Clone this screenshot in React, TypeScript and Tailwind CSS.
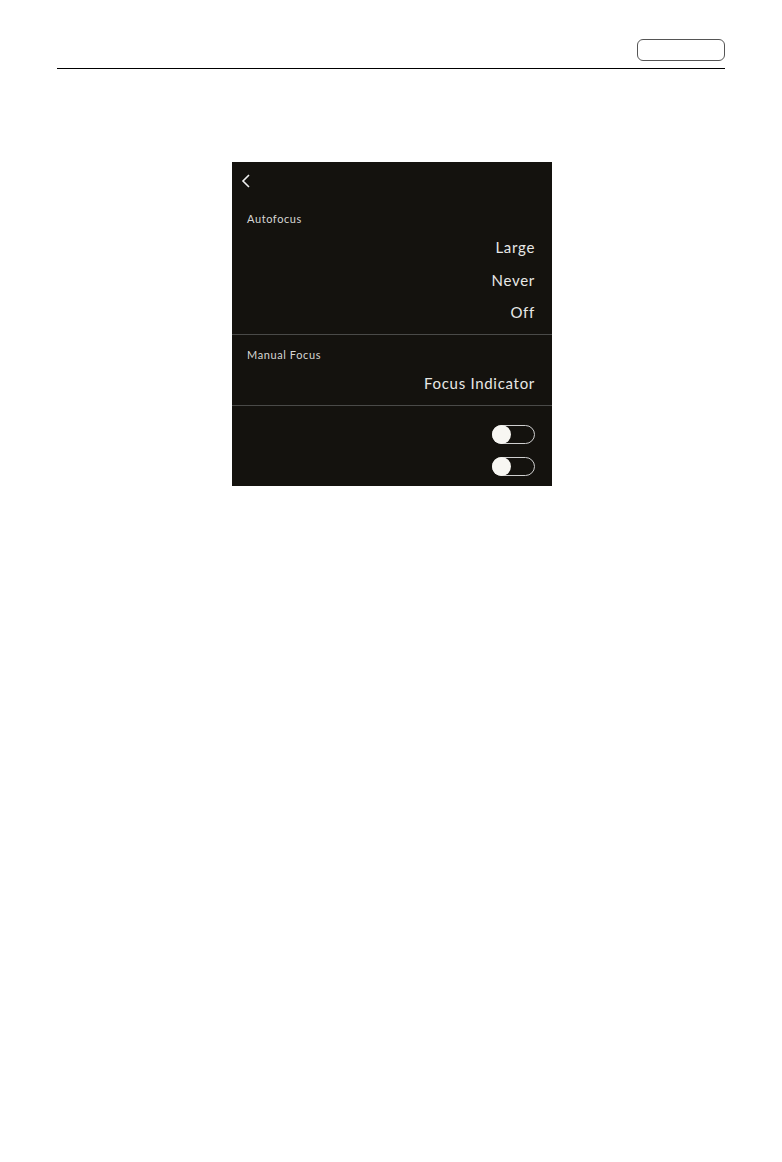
import React from 'react';

const Toggle: React.FC = () => (
  <div className="relative w-[43px] h-[19px] rounded-full border border-[#cfcfcf]">
    <span className="absolute -left-px -top-px w-[19px] h-[19px] rounded-full bg-[#f7f6f2]" />
  </div>
);

const Value: React.FC<{ children: React.ReactNode }> = ({ children }) => (
  <div className="text-right text-[15px] leading-none tracking-[0.7px] text-[#e8e8e6]">{children}</div>
);

const App: React.FC = () => {
  return (
    <div className="w-[782px] h-[1162px] bg-white font-['Lato','Liberation_Sans',sans-serif]">
      <header className="pt-[39px] pl-[57px] pr-[57px]">
        <div className="flex justify-end">
          <div className="w-[88px] h-[22px] rounded-[6px] border border-[#555]" />
        </div>
        <div className="mt-[7px] h-px bg-black" />
      </header>

      <div className="ml-[232px] mt-[93px] w-[320px] h-[324px] bg-[#14120e] text-white">
        <div className="h-[36px] pl-[9px] pt-[12px]">
          <svg width="10" height="14" viewBox="0 0 10 14" fill="none">
            <path d="M8 1 L2 7 L8 13" stroke="#f0f0f0" strokeWidth="1.6" />
          </svg>
        </div>

        <section className="px-[15px] pb-[14px]">
          <div className="pt-[15px] text-[11px] leading-none tracking-[0.6px] text-[#d6d6d4]">Autofocus</div>
          <div className="mt-[16px] flex flex-col gap-[17.5px] pr-[2px]">
            <Value>Large</Value>
            <Value>Never</Value>
            <Value>Off</Value>
          </div>
        </section>
        <div className="h-px bg-[#4a4a48]" />

        <section className="px-[15px] h-[70px]">
          <div className="pt-[14px] text-[11px] leading-none tracking-[0.6px] text-[#d6d6d4]">Manual Focus</div>
          <div className="mt-[16px] pr-[2px]">
            <Value>Focus Indicator</Value>
          </div>
        </section>
        <div className="h-px bg-[#4a4a48]" />

        <section className="flex flex-col items-end gap-[13px] pt-[19px] pr-[17px]">
          <Toggle />
          <Toggle />
        </section>
      </div>
    </div>
  );
};

export default App;
